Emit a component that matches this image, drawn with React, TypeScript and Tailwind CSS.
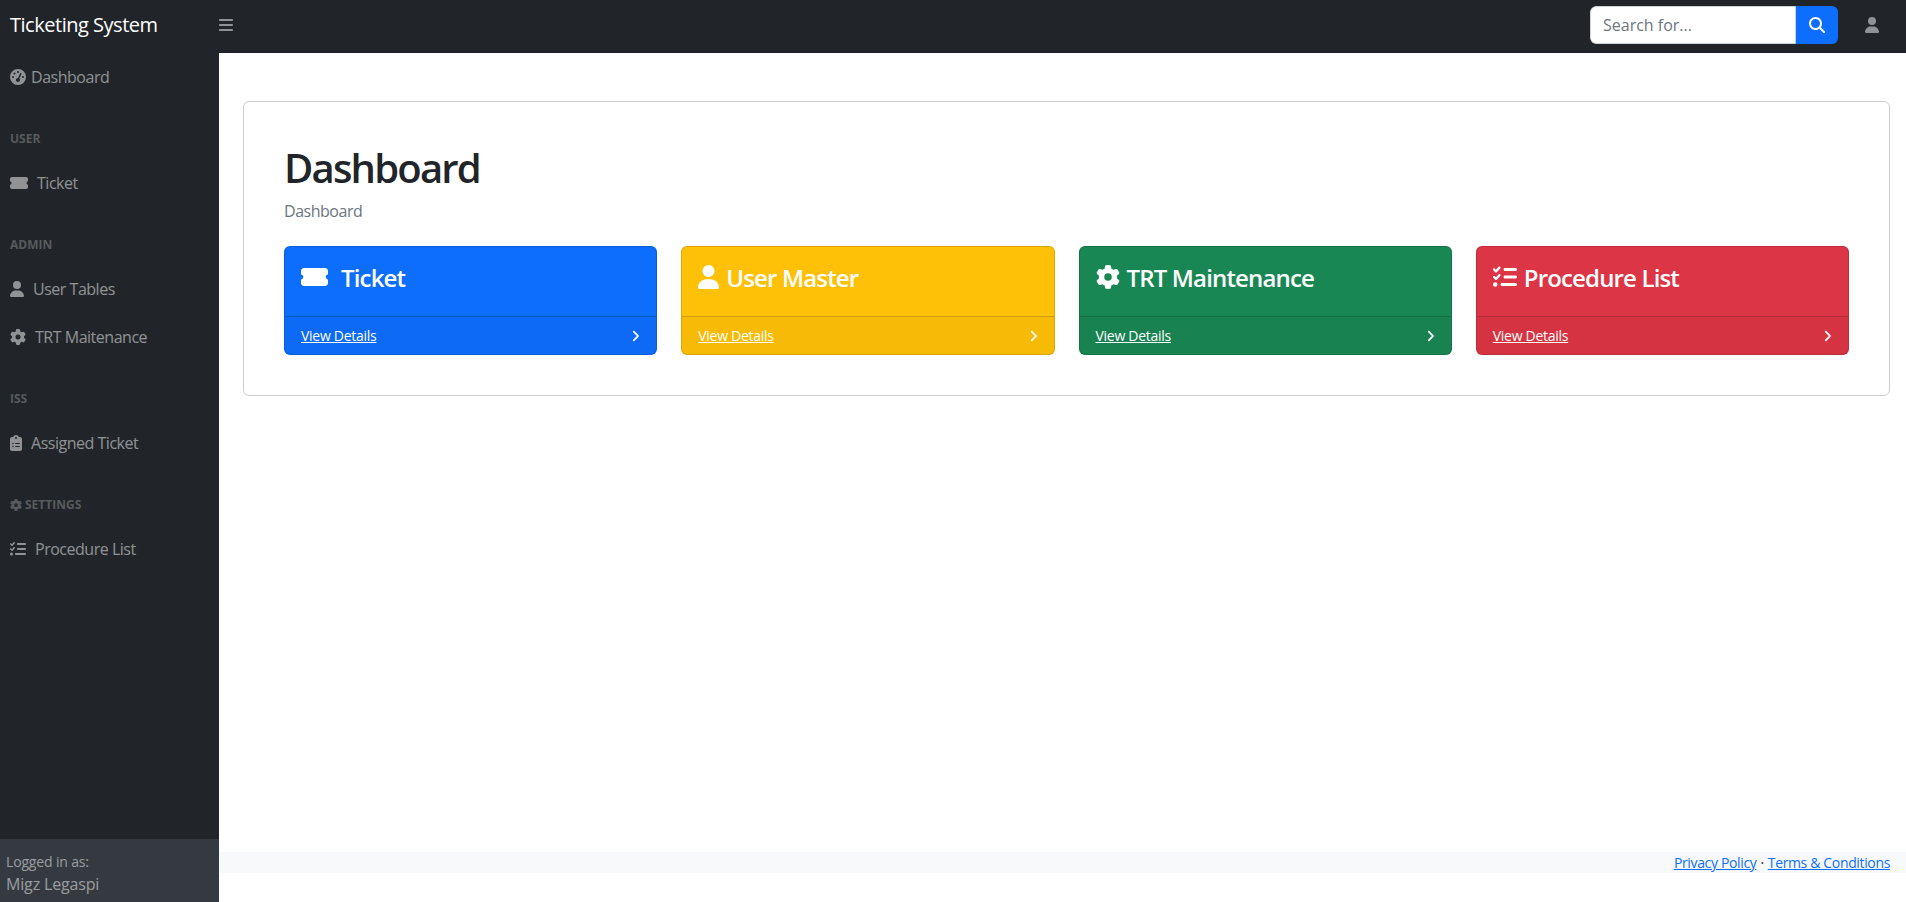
import type { ReactNode } from 'react';
import { FaAngleRight, FaBars, FaClipboardList, FaGaugeHigh, FaGear, FaListCheck, FaMagnifyingGlass, FaTicketSimple, FaUser } from 'react-icons/fa6';

const Heading = ({ children }: { children: ReactNode }) => (
  <div className="flex items-center pt-[29px] pb-[11px] pl-2.5 text-xs leading-[18px] font-bold tracking-normal uppercase text-white/25">{children}</div>
);

const NavLink = ({ icon, label, gap }: { icon: ReactNode; label: string; gap: string }) => (
  <a href="#" className={`flex h-12 items-center pl-2.5 text-white/50 ${gap}`}>
    {icon}
    <span>{label}</span>
  </a>
);

interface TileProps {
  icon: ReactNode;
  title: string;
  bg: string;
  gap: string;
}

const Tile = ({ icon, title, bg, gap }: TileProps) => (
  <div className={`overflow-hidden rounded-md border border-black/15 text-white ${bg}`}>
    <div className={`flex h-[69px] items-start p-4 text-2xl leading-[29px] font-semibold tracking-[-0.035em] ${gap}`}>
      {icon}
      <span>{title}</span>
    </div>
    <div className="flex h-[38px] items-center justify-between border-t border-black/15 bg-black/[0.03] px-4 text-sm tracking-[-0.02em]">
      <a href="#" className="underline">View Details</a>
      <FaAngleRight className="h-3.5 w-[9px]" />
    </div>
  </div>
);

export default function App() {
  return (
    <div className="flex h-screen flex-col bg-white font-['Open_Sans',sans-serif] text-base tracking-[-0.03em] text-[#212529]">
      {/* top bar */}
      <header className="flex h-[53px] shrink-0 items-center bg-[#212529] pb-[3px]">
        <div className="w-[218px] pl-2.5 text-xl text-white">Ticketing System</div>
        <FaBars className="h-4 w-4 text-white/50" />
        <div className="ml-auto flex h-[38px] w-[248px] overflow-hidden rounded-md">
          <input
            placeholder="Search for..."
            className="w-[206px] rounded-l-md border border-[#ced4da] bg-white px-3 text-base tracking-normal text-[#212529] placeholder:text-[#6c757d]"
          />
          <button className="flex w-[42px] items-center justify-center bg-[#0d6efd] text-white">
            <FaMagnifyingGlass className="h-4 w-4" />
          </button>
        </div>
        <FaUser className="mx-[26px] h-4 w-4 text-white/50" />
      </header>

      <div className="flex min-h-0 flex-1">
        {/* sidebar */}
        <aside className="flex w-[219px] shrink-0 flex-col justify-between bg-[#212529]">
          <nav>
            <NavLink icon={<FaGaugeHigh className="h-4 w-4" />} label="Dashboard" gap="gap-[5px]" />
            <Heading>User</Heading>
            <NavLink icon={<FaTicketSimple className="h-4 w-[18px]" />} label="Ticket" gap="gap-[9px]" />
            <Heading>Admin</Heading>
            <NavLink icon={<FaUser className="h-4 w-3.5" />} label="User Tables" gap="gap-[9px]" />
            <NavLink icon={<FaGear className="h-4 w-4" />} label="TRT Maitenance" gap="gap-[9px]" />
            <Heading>ISS</Heading>
            <NavLink icon={<FaClipboardList className="h-4 w-3" />} label="Assigned Ticket" gap="gap-[9px]" />
            <Heading>
              <FaGear className="mr-[3px] text-xs" />
              Settings
            </Heading>
            <NavLink icon={<FaListCheck className="h-4 w-4" />} label="Procedure List" gap="gap-[9px]" />
          </nav>
          <div className="h-[63px] bg-[#343a40] pt-3 pl-1.5 tracking-[-0.01em] text-white/50">
            <div className="text-sm leading-[21px]">Logged in as:</div>
            <div className="leading-6">Migz Legaspi</div>
          </div>
        </aside>

        {/* main */}
        <main className="flex min-w-0 flex-1 flex-col">
          <div className="pt-12 pr-4 pl-6">
            <section className="rounded-md border border-black/20 p-10">
              <h1 className="pt-0.5 text-[40px] leading-[48px] font-semibold tracking-[-0.045em]">Dashboard</h1>
              <p className="mt-[7px] mb-[23px] leading-6 text-[#6c757d]">Dashboard</p>
              <div className="grid grid-cols-4 gap-6">
                <Tile icon={<FaTicketSimple className="mt-[2px] h-6 w-[27px]" />} title="Ticket" bg="bg-[#0d6efd]" gap="gap-[13px]" />
                <Tile icon={<FaUser className="mt-[2px] h-6 w-[21px]" />} title="User Master" bg="bg-[#ffc107]" gap="gap-[7px]" />
                <Tile icon={<FaGear className="mt-[2px] h-6 w-6" />} title="TRT Maintenance" bg="bg-[#198754]" gap="gap-[7px]" />
                <Tile icon={<FaListCheck className="mt-[2px] h-6 w-6" />} title="Procedure List" bg="bg-[#dc3545]" gap="gap-[7px]" />
              </div>
            </section>
          </div>
          <footer className="mt-auto mb-[29px] flex h-[21px] items-center justify-end bg-[#f8f9fa] pr-4 text-sm tracking-[-0.025em]">
            <a href="#" className="text-[#0d6efd] underline">Privacy Policy</a>
            <span className="mx-1">·</span>
            <a href="#" className="text-[#0d6efd] underline">Terms &amp; Conditions</a>
          </footer>
        </main>
      </div>
    </div>
  );
}
